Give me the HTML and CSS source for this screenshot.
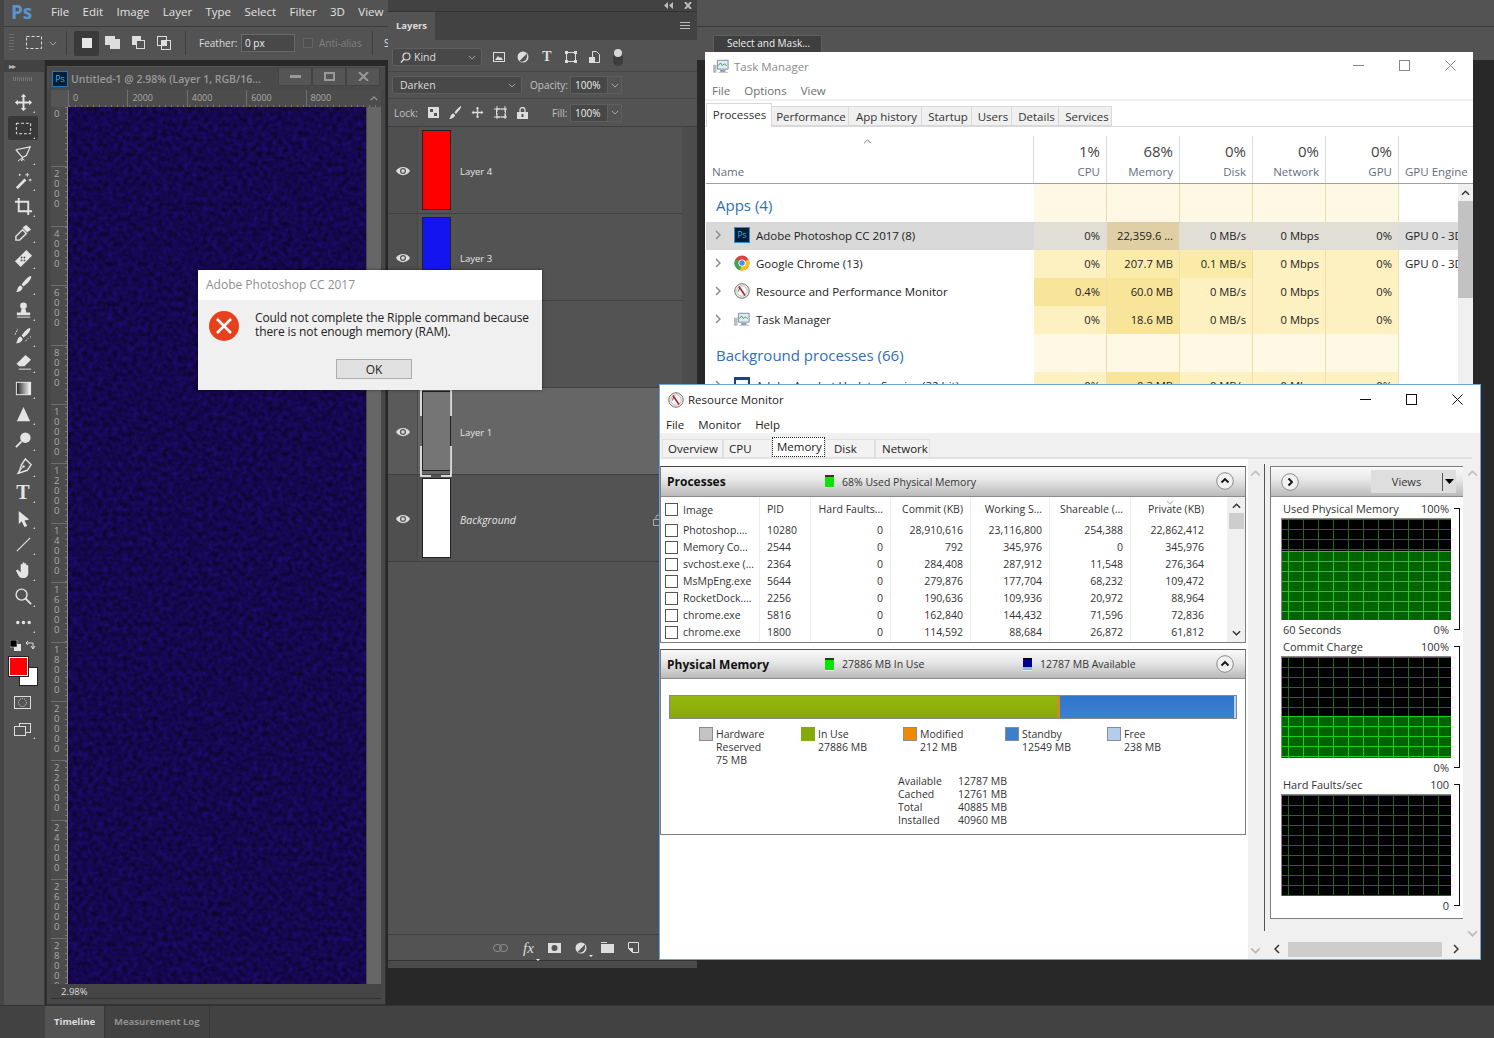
FILE: index.html
```html
<!DOCTYPE html>
<html lang="en">
<head>
<meta charset="utf-8">
<title>Photoshop, Task Manager and Resource Monitor</title>
<link rel="stylesheet" href="styles.css">
</head>
<body>
<svg class="defs" aria-hidden="true">
  <symbol id="chev-d" viewBox="0 0 10 6"><path d="M1 1l4 4 4-4" fill="none" stroke="currentColor"/></symbol>
  <symbol id="chev-r" viewBox="0 0 6 10"><path d="M1 1l4 4-4 4" fill="none" stroke="currentColor" stroke-width="1.5"/></symbol>
  <symbol id="up" viewBox="0 0 10 6"><path d="M1 5l4-4 4 4" fill="none" stroke="currentColor" stroke-width="1.6"/></symbol>
  <symbol id="down" viewBox="0 0 10 6"><path d="M1 1l4 4 4-4" fill="none" stroke="currentColor" stroke-width="1.6"/></symbol>
  <symbol id="eye" viewBox="0 0 14 10"><path d="M0 5c3-5.500 11-5.500 14 0-3 5.500-11 5.500-14 0z" fill="#ddd"/><circle cx="7" cy="5" r="3" fill="#555"/><circle cx="7" cy="5" r="1.700" fill="#ddd"/></symbol>
  <symbol id="tm" viewBox="0 0 18 16"><path d="M0 6h4v9H0z" fill="#b5bcc4"/><path d="M5 1h12v10H5z" fill="#dfeaf3" stroke="#74879a"/><path d="M6 7l2.500-3 2 3 2-2 3 2" fill="none" stroke="#3f9a4d"/><path d="M8 12h6v2H8z" fill="#8a949e"/><path d="M6 14h11v1H6z" fill="#aab2ba"/></symbol>
  <symbol id="rm" viewBox="0 0 16 16"><circle cx="8" cy="8" r="7.300" fill="#e8e4de" stroke="#7b7b7b"/><circle cx="8" cy="8" r="5" fill="#fff" stroke="#a9a9a9" stroke-width=".6"/><path d="M5 3.500l6 9" stroke="#b3202a" stroke-width="1.600"/><path d="M4.500 8.500l1-3.500" stroke="#333" stroke-width=".8"/></symbol>
  <symbol id="collapse" viewBox="0 0 18 18"><circle cx="9" cy="9" r="8.300" fill="#f1f1f1" stroke="#8c8c8c"/><path d="M5.500 10.500L9 7l3.500 3.500" fill="none" stroke="#111" stroke-width="1.800"/></symbol>
</svg>

<div class="app">
  <header class="menubar">
    <span class="ps-logo">Ps</span>
    <nav class="menu">
      <span>File</span><span>Edit</span><span>Image</span><span>Layer</span><span>Type</span><span>Select</span><span>Filter</span><span>3D</span><span>View</span>
    </nav>
  </header>

  <div class="options">
    <span class="grip-v"></span>
    <svg class="o-marq" width="16" height="14" viewBox="0 0 16 14"><rect x=".5" y=".5" width="15" height="12" fill="none" stroke="#ddd" stroke-dasharray="3 2"/></svg>
    <svg class="o-chev" width="8" height="5"><use href="#chev-d"/></svg>
    <span class="o-sep"></span>
    <span class="o-btn on"><svg width="12" height="12"><rect width="10" height="10" x="1" y="1" fill="#e6e6e6"/></svg></span>
    <span class="o-btn"><svg width="16" height="14" viewBox="0 0 16 14"><rect x="0" y="0" width="10" height="9" fill="#ddd"/><rect x="5" y="3" width="10" height="10" fill="#ddd"/></svg></span>
    <span class="o-btn"><svg width="14" height="14" viewBox="0 0 14 14"><rect x="0" y="0" width="9" height="9" fill="#ddd"/><rect x="4.500" y="4.500" width="8" height="8" fill="#535353" stroke="#ddd"/></svg></span>
    <span class="o-btn"><svg width="15" height="15" viewBox="0 0 15 15"><rect x=".5" y=".5" width="9" height="9" fill="none" stroke="#ddd"/><rect x="4.500" y="4.500" width="9" height="9" fill="none" stroke="#ddd"/><rect x="5" y="5" width="4" height="4" fill="#ddd"/></svg></span>
    <span class="o-sep second"></span>
    <span class="o-label feather">Feather:</span>
    <span class="o-input">0 px</span>
    <span class="o-check"></span>
    <span class="o-dim">Anti-alias</span>
    <span class="o-sep third"></span>
    <span class="o-label">S</span>
    <span class="o-push"></span>
    <span class="o-mask">Select and Mask...</span>
  </div>

  <div class="workspace">
    <aside class="tools">
      <div class="tools-head"><span>▸▸</span></div>
      <div class="tools-grip"></div>
      <span class="tool"><svg viewBox="0 0 20 20"><path d="M10 1l3 3h-2v5h5V7l3 3-3 3v-2h-5v5h2l-3 3-3-3h2v-5H4v2l-3-3 3-3v2h5V4H7z" fill="#e4e4e4"/></svg></span>
      <span class="tool active"><svg viewBox="0 0 20 20"><rect x="2.500" y="4.500" width="15" height="11" fill="none" stroke="#eee" stroke-dasharray="3 2"/></svg></span>
      <span class="tool"><svg viewBox="0 0 20 20"><path d="M2 5l15-3-4 9-4 2-1 4M2 5l5 6 2 2" fill="none" stroke="#e4e4e4" stroke-width="1.300"/><path d="M4 17l4-3 3 2" fill="none" stroke="#e4e4e4"/></svg></span>
      <span class="tool"><svg viewBox="0 0 20 20"><path d="M2 17l9-9 2 2-9 9z" fill="#e4e4e4"/><path d="M14 2v4M12 4h4M6 3v2M5 4h2M17 8v3M15.500 9.500h3" stroke="#e4e4e4"/></svg></span>
      <span class="tool"><svg viewBox="0 0 20 20"><path d="M5 1v14h14M1 5h14v14" fill="none" stroke="#e4e4e4" stroke-width="2"/></svg></span>
      <span class="tool"><svg viewBox="0 0 20 20"><path d="M13 2l5 5-3 2-1 1-5-5 1-1z" fill="#e4e4e4"/><path d="M9 7l4 4-7 7H2v-4z" fill="none" stroke="#e4e4e4" stroke-width="1.500"/></svg></span>
      <span class="tool"><svg viewBox="0 0 20 20"><path d="M1 13L13 1l6 6L7 19z" fill="#e4e4e4"/><g fill="#535353"><circle cx="8" cy="9" r="1"/><circle cx="11" cy="12" r="1"/><circle cx="8" cy="12" r="1"/><circle cx="11" cy="9" r="1"/></g></svg></span>
      <span class="tool"><svg viewBox="0 0 20 20"><path d="M18 1c1 3-4 8-8 11l-2-2c3-4 7-9 10-9z" fill="#e4e4e4"/><path d="M7 11l2 2c0 3-3 5-7 5 2-1 1-6 5-7z" fill="#e4e4e4"/></svg></span>
      <span class="tool"><svg viewBox="0 0 20 20"><circle cx="10" cy="5" r="3.500" fill="#e4e4e4"/><path d="M8 8h4l1 4H7zM3 12h14v3H3z" fill="#e4e4e4"/><path d="M3 17h14" stroke="#e4e4e4"/></svg></span>
      <span class="tool"><svg viewBox="0 0 20 20"><path d="M17 1c1 3-3 7-7 10L8 9c3-4 6-8 9-8z" fill="#e4e4e4"/><path d="M7 10l2 2c0 3-3 5-7 5 2-1 1-6 5-7z" fill="#e4e4e4"/><path d="M1 8l3-6M12 15l3-3M17 10l1 1" stroke="#e4e4e4" stroke-dasharray="2 1"/></svg></span>
      <span class="tool"><svg viewBox="0 0 20 20"><path d="M12 2l6 5-7 7H6l-3-3z" fill="#e4e4e4"/><path d="M5 17h13M6 14l-3-3" stroke="#e4e4e4" fill="none"/></svg></span>
      <span class="tool"><svg viewBox="0 0 20 20"><defs><linearGradient id="gr"><stop offset="0" stop-color="#222"/><stop offset="1" stop-color="#fff"/></linearGradient></defs><rect x="2.500" y="3.500" width="15" height="13" fill="url(#gr)" stroke="#eee"/></svg></span>
      <span class="tool"><svg viewBox="0 0 20 20"><path d="M10 2l7 15H3z" fill="#e4e4e4"/></svg></span>
      <span class="tool"><svg viewBox="0 0 20 20"><circle cx="12" cy="7" r="5.500" fill="#e4e4e4"/><path d="M8 11l-6 6" stroke="#e4e4e4" stroke-width="2"/></svg></span>
      <span class="tool"><svg viewBox="0 0 20 20"><path d="M12 2l6 6-4 6-9 3 3-9z" fill="none" stroke="#e4e4e4" stroke-width="1.500"/><path d="M3 18l6-7" stroke="#e4e4e4"/><circle cx="10" cy="10" r="1.300" fill="#e4e4e4"/></svg></span>
      <span class="tool tool-t">T</span>
      <span class="tool"><svg viewBox="0 0 20 20"><path d="M5 2l11 9-5 1 3 6-3 1-3-6-3 3z" fill="#e4e4e4"/></svg></span>
      <span class="tool"><svg viewBox="0 0 20 20"><path d="M3 17L17 3" stroke="#e4e4e4" stroke-width="1.200"/></svg></span>
      <span class="tool"><svg viewBox="0 0 20 20"><path d="M2 10l2-1 3 3V4c0-1 2-1 2 0V2c0-1 2-1 2 0v1c0-1 2-1 2 0v2c0-1 2-1 2 0v8c0 3-2 5-5 5H9c-3 0-4-2-5-4z" fill="#e4e4e4"/></svg></span>
      <span class="tool"><svg viewBox="0 0 20 20"><circle cx="8" cy="8" r="5.800" fill="none" stroke="#e4e4e4" stroke-width="1.500"/><path d="M12 12l6 6" stroke="#e4e4e4" stroke-width="2"/></svg></span>
      <span class="tool dots"><svg viewBox="0 0 20 20"><g fill="#e4e4e4"><circle cx="4" cy="10" r="1.800"/><circle cx="10" cy="10" r="1.800"/><circle cx="16" cy="10" r="1.800"/></g></svg></span>
      <div class="mini-swatch">
        <svg width="11" height="11" viewBox="0 0 11 11"><rect x="4" y="4" width="7" height="7" fill="#e4e4e4"/><rect width="7" height="7" fill="#000" stroke="#ddd" stroke-width=".6"/></svg>
        <svg width="11" height="11" viewBox="0 0 11 11"><path d="M1 3h7v5M6 6l2 3 2-3M3 1L1 3l2 2" fill="none" stroke="#ddd"/></svg>
      </div>
      <div class="swatches"><span class="bg"></span><span class="fg"></span></div>
      <span class="tool2"><svg viewBox="0 0 18 14"><rect x=".5" y=".5" width="16" height="12" fill="none" stroke="#ddd"/><circle cx="8.500" cy="6.500" r="4" fill="none" stroke="#ddd" stroke-dasharray="1 1"/></svg></span>
      <span class="tool2 arrowed"><svg viewBox="0 0 18 14"><rect x="5.500" y=".5" width="11" height="9" fill="none" stroke="#ddd"/><rect x=".5" y="3.500" width="11" height="9" fill="#535353" stroke="#ddd"/></svg></span>
    </aside>

    <section class="docarea">
      <div class="docwin">
        <div class="doc-title">
          <span class="ps-chip">Ps</span>
          <span class="doc-name">Untitled-1 @ 2.98% (Layer 1, RGB/16...</span>
          <span class="doc-btns">
            <span><svg width="11" height="3"><rect width="11" height="3" fill="#999"/></svg></span>
            <span><svg width="11" height="9"><rect x="1" y="1" width="9" height="7" fill="none" stroke="#999" stroke-width="2"/></svg></span>
            <span><svg width="11" height="9"><path d="M1 0l9 9M10 0L1 9" stroke="#999" stroke-width="2"/></svg></span>
          </span>
        </div>
        <div class="hruler">
          <span class="corner"></span>
          <span class="rk">0</span><span class="rk">2000</span><span class="rk">4000</span><span class="rk">6000</span><span class="rk">8000</span>
          <svg class="ruler-up" width="8" height="5"><use href="#up"/></svg>
        </div>
        <div class="docmain">
          <div class="vruler">
            <span>0</span><span>2000</span><span>4000</span><span>6000</span><span>8000</span><span>10000</span><span>12000</span><span>14000</span><span>16000</span><span>18000</span><span>20000</span><span>22000</span><span>24000</span><span>26000</span><span>28000</span>
          </div>
          <svg class="noise" width="298" height="878">
            <filter id="n" x="0" y="0" width="100%" height="100%" color-interpolation-filters="sRGB">
              <feTurbulence type="fractalNoise" baseFrequency=".2" numOctaves="2" seed="7"/>
              <feColorMatrix values=".1 0 0 0 .035  .03 0 0 0 .015  .42 0 0 0 .1  0 0 0 0 1"/>
            </filter>
            <rect width="298" height="878" filter="url(#n)"/>
          </svg>
          <div class="doc-scroll"></div>
        </div>
        <div class="doc-status"><span>2.98%</span></div>
      </div>
    </section>
  </div>

  <footer class="timeline">
    <span class="tl-tab on">Timeline</span>
    <span class="tl-tab">Measurement Log</span>
  </footer>
</div>

<section class="layers-win">
  <div class="lp-top">
    <svg width="9" height="7" viewBox="0 0 9 7"><path d="M4 0v7L0 3.500zM9 0v7L5 3.500z" fill="#bbb"/></svg>
    <svg width="8" height="7" viewBox="0 0 8 7"><path d="M1 0l6 7M7 0L1 7" stroke="#bbb" stroke-width="2"/></svg>
  </div>
  <div class="lp-tabs">
    <span class="lp-tab">Layers</span>
    <svg class="lp-menu" width="10" height="7"><path d="M0 .5h10M0 3.500h10M0 6.500h10" stroke="#bbb"/></svg>
  </div>
  <div class="lp-row kind">
    <span class="sel w90"><svg width="11" height="11" viewBox="0 0 11 11"><circle cx="6.500" cy="4.500" r="3.500" fill="none" stroke="#ddd" stroke-width="1.200"/><path d="M4 7l-3 3.500" stroke="#ddd" stroke-width="1.400"/></svg><b>Kind</b><svg class="cv" width="8" height="5"><use href="#chev-d"/></svg></span>
    <span class="kicons">
      <svg width="12" height="10" viewBox="0 0 12 10"><rect x=".5" y=".5" width="11" height="9" fill="none" stroke="#ddd"/><path d="M2 8l3-4 2 2 1-1 2 3z" fill="#ddd"/></svg>
      <svg width="12" height="12" viewBox="0 0 12 12"><circle cx="6" cy="6" r="5.500" fill="#ddd"/><path d="M10 2.500L2.500 10c2 1.500 8.500 1 7.500-7.500z" fill="#535353"/></svg>
      <span class="kt">T</span>
      <svg width="12" height="12" viewBox="0 0 12 12"><rect x="1.500" y="1.500" width="9" height="9" fill="none" stroke="#ddd"/><g fill="#ddd"><rect width="3" height="3"/><rect x="9" width="3" height="3"/><rect y="9" width="3" height="3"/><rect x="9" y="9" width="3" height="3"/></g></svg>
      <svg width="11" height="12" viewBox="0 0 11 12"><path d="M3.500.5h4l3 3v8h-10v-5h3z" fill="none" stroke="#ddd"/><rect x="0" y="6" width="6" height="6" fill="#ddd"/></svg>
    </span>
    <span class="toggle"><i></i></span>
  </div>
  <div class="lp-row blend">
    <span class="sel w130"><b>Darken</b><svg class="cv" width="8" height="5"><use href="#chev-d"/></svg></span>
    <span class="lbl">Opacity:</span>
    <span class="num">100%<em><svg width="8" height="5"><use href="#chev-d"/></svg></em></span>
  </div>
  <div class="lp-row lock">
    <span class="lbl lock-l">Lock:</span>
    <span class="licons">
      <svg width="11" height="11" viewBox="0 0 11 11"><rect width="11" height="11" fill="#ddd"/><g fill="#535353"><rect x="2" y="2" width="3" height="3"/><rect x="6" y="6" width="3" height="3"/></g></svg>
      <svg width="13" height="13" viewBox="0 0 13 13"><path d="M12 0c1 2-3 5-5 8L5.500 6.500C7 4 10 1 12 0zM4.500 7.500L6 9c0 2-3 4-6 4 2-1 1-5 4.500-5.500z" fill="#ddd"/></svg>
      <svg width="13" height="13" viewBox="0 0 20 20"><path d="M10 1l3 3h-2v5h5V7l3 3-3 3v-2h-5v5h2l-3 3-3-3h2v-5H4v2l-3-3 3-3v2h5V4H7z" fill="#ddd"/></svg>
      <svg width="14" height="13" viewBox="0 0 14 13"><path d="M2.500 3h9v8h-9zM0 3h14M3 0v13M11 0v13M0 11h14" fill="none" stroke="#ddd" stroke-dasharray="6 1"/></svg>
      <svg width="11" height="12" viewBox="0 0 11 12"><path d="M3 5V3a2.500 2.500 0 015 0v2" fill="none" stroke="#ddd" stroke-width="1.300"/><rect y="5" width="11" height="7" fill="#ddd"/><rect x="4.500" y="7" width="2" height="3" fill="#535353"/></svg>
    </span>
    <span class="lbl fill-l">Fill:</span>
    <span class="num">100%<em><svg width="8" height="5"><use href="#chev-d"/></svg></em></span>
  </div>
  <div class="lp-list">
    <div class="layer"><span class="eyecol"><svg width="14" height="10"><use href="#eye"/></svg></span><span class="thumb red"></span><span class="lname">Layer 4</span></div>
    <div class="layer"><span class="eyecol"><svg width="14" height="10"><use href="#eye"/></svg></span><span class="thumb blue"></span><span class="lname">Layer 3</span></div>
    <div class="layer"><span class="eyecol"><svg width="14" height="10"><use href="#eye"/></svg></span><span class="thumb white"></span><span class="lname">Layer 2</span></div>
    <div class="layer current"><span class="eyecol"><svg width="14" height="10"><use href="#eye"/></svg></span><span class="thumb grey"><svg class="brackets" width="32" height="90" viewBox="0 0 32 90"><path d="M1 28V1M31 28V1M1 58v30h10M31 58v30H21" fill="none" stroke="#fff" stroke-width="1.500"/></svg></span><span class="lname">Layer 1</span></div>
    <div class="layer"><span class="eyecol"><svg width="14" height="10"><use href="#eye"/></svg></span><span class="thumb white"></span><span class="lname ital">Background</span><svg class="bg-lock" width="10" height="12" viewBox="0 0 10 12"><path d="M3 5V3a2 2 0 014 0v2M.5 5.500h9v6h-9z" fill="none" stroke="#aaa"/></svg></div>
    <div class="lp-empty"></div>
  </div>
  <div class="lp-foot">
    <svg width="15" height="8" viewBox="0 0 15 8"><rect x=".5" y=".5" width="8" height="7" rx="3.500" fill="none" stroke="#8e8e8e"/><rect x="6.500" y=".5" width="8" height="7" rx="3.500" fill="none" stroke="#8e8e8e"/></svg>
    <span class="fx tri">fx</span>
    <svg width="13" height="10" viewBox="0 0 13 10"><rect width="13" height="10" fill="#ddd"/><circle cx="6.500" cy="5" r="3" fill="#535353"/></svg>
    <span class="tri"><svg width="12" height="12" viewBox="0 0 12 12"><circle cx="6" cy="6" r="5.500" fill="#ddd"/><path d="M10 2.500L2.500 10c2 1.500 8.500 1 7.500-7.500z" fill="#535353"/></svg></span>
    <svg width="13" height="11" viewBox="0 0 13 11"><path d="M0 0h6v1H0zM0 2h13v9H0z" fill="#ddd"/></svg>
    <svg width="11" height="11" viewBox="0 0 11 11"><path d="M.5.500h10v10h-6l-4-4z" fill="none" stroke="#ddd"/><path d="M0 6h5v5z" fill="#ddd"/></svg>
  </div>
  <div class="lp-grip"></div>
</section>

<section class="taskman">
  <div class="win-title tm-title">
    <svg width="16" height="15"><use href="#tm"/></svg>
    <span>Task Manager</span>
    <span class="win-btns light">
      <svg width="11" height="11"><path d="M0 5.500h11" stroke="#888"/></svg>
      <svg width="11" height="11"><rect x=".5" y=".5" width="10" height="10" fill="none" stroke="#888"/></svg>
      <svg width="11" height="11"><path d="M.5.500l10 10M10.500.500l-10 10" stroke="#888"/></svg>
    </span>
  </div>
  <div class="tm-menu"><span>File</span><span>Options</span><span>View</span></div>
  <div class="tm-tabs">
    <span class="tm-tab on">Processes</span><span class="tm-tab">Performance</span><span class="tm-tab">App history</span><span class="tm-tab">Startup</span><span class="tm-tab">Users</span><span class="tm-tab">Details</span><span class="tm-tab">Services</span>
  </div>
  <div class="tm-grid tm-head">
    <div class="h-name"><svg class="sort" width="9" height="5"><use href="#chev-d" transform="matrix(1 0 0 -1 0 5)"/></svg><span>Name</span></div>
    <div class="h"><b>1%</b><span>CPU</span></div>
    <div class="h"><b>68%</b><span>Memory</span></div>
    <div class="h"><b>0%</b><span>Disk</span></div>
    <div class="h"><b>0%</b><span>Network</span></div>
    <div class="h"><b>0%</b><span>GPU</span></div>
    <div class="h eng"><span>GPU Engine</span></div>
  </div>
  <div class="tm-body">
    <div class="tm-rows">
      <div class="tm-grid sec"><div class="sn">Apps (4)</div><i></i><i></i><i></i><i></i><i></i><u></u></div>
      <div class="tm-grid row selrow">
        <div class="n"><svg class="exp" width="6" height="10"><use href="#chev-r"/></svg><span class="ps-app">Ps</span>Adobe Photoshop CC 2017 (8)</div>
        <i>0%</i><i class="m1">22,359.6 ...</i><i>0 MB/s</i><i>0 Mbps</i><i>0%</i><u>GPU 0 - 3D</u>
      </div>
      <div class="tm-grid row">
        <div class="n"><svg class="exp" width="6" height="10"><use href="#chev-r"/></svg><svg class="ap" width="16" height="16" viewBox="0 0 16 16"><circle cx="8" cy="8" r="7.500" fill="#d9433b"/><path d="M8 8L1.500 4.200A7.500 7.500 0 0 0 6 15.200z" fill="#3aa655"/><path d="M8 8l-2 7.200A7.500 7.500 0 0 0 15.500 8c0-1.200-.3-2.600-1-3.700z" fill="#f5c41b"/><circle cx="8" cy="8" r="3.600" fill="#fff"/><circle cx="8" cy="8" r="2.700" fill="#4a8be8"/></svg>Google Chrome (13)</div>
        <i>0%</i><i class="m2">207.7 MB</i><i class="m2">0.1 MB/s</i><i>0 Mbps</i><i>0%</i><u>GPU 0 - 3D</u>
      </div>
      <div class="tm-grid row">
        <div class="n"><svg class="exp" width="6" height="10"><use href="#chev-r"/></svg><svg class="ap" width="16" height="16"><use href="#rm"/></svg>Resource and Performance Monitor</div>
        <i class="m3">0.4%</i><i class="m3">60.0 MB</i><i>0 MB/s</i><i>0 Mbps</i><i>0%</i><u></u>
      </div>
      <div class="tm-grid row">
        <div class="n"><svg class="exp" width="6" height="10"><use href="#chev-r"/></svg><svg class="ap" width="16" height="15"><use href="#tm"/></svg>Task Manager</div>
        <i>0%</i><i class="m3">18.6 MB</i><i>0 MB/s</i><i>0 Mbps</i><i>0%</i><u></u>
      </div>
      <div class="tm-grid sec"><div class="sn">Background processes (66)</div><i></i><i></i><i></i><i></i><i></i><u></u></div>
      <div class="tm-grid row">
        <div class="n"><svg class="exp" width="6" height="10"><use href="#chev-r"/></svg><svg class="ap" width="16" height="16"><rect width="16" height="16" fill="#1c3f94"/><rect x="2" y="3" width="12" height="11" fill="#fff"/></svg>Adobe Acrobat Update Service (32 bit)</div>
        <i>0%</i><i class="m3">0.3 MB</i><i>0 MB/s</i><i>0 Mbps</i><i>0%</i><u></u>
      </div>
    </div>
    <div class="tm-scroll"><svg width="9" height="6"><use href="#up"/></svg><span></span></div>
  </div>
</section>

<section class="resmon">
  <div class="win-title rm-title">
    <svg width="16" height="16"><use href="#rm"/></svg>
    <span>Resource Monitor</span>
    <span class="win-btns dark">
      <svg width="11" height="11"><path d="M0 5.500h11" stroke="#111"/></svg>
      <svg width="11" height="11"><rect x=".5" y=".5" width="10" height="10" fill="none" stroke="#111"/></svg>
      <svg width="11" height="11"><path d="M.5.500l10 10M10.500.500l-10 10" stroke="#111"/></svg>
    </span>
  </div>
  <div class="rm-menu"><span>File</span><span>Monitor</span><span>Help</span></div>
  <div class="rm-tabs">
    <span class="rt t1">Overview</span><span class="rt t2">CPU</span><span class="rt t3 on">Memory</span><span class="rt t4">Disk</span><span class="rt t5">Network</span>
  </div>
  <div class="rm-main">
    <div class="rm-left">
      <div class="pane">
        <div class="pane-head"><strong>Processes</strong><span class="chip g"></span><span class="ph-t">68% Used Physical Memory</span><svg class="col" width="18" height="18"><use href="#collapse"/></svg></div>
        <div class="ptable">
          <div class="pcols">
            <div class="pr phead"><span class="ck-c"><i class="ck"></i>Image</span><span>PID</span><span class="r">Hard Faults...</span><span class="r">Commit (KB)</span><span class="r">Working S...</span><span class="r">Shareable (...</span><span class="r sorted">Private (KB)</span></div>
            <div class="pr"><span class="ck-c"><i class="ck"></i>Photoshop....</span><span>10280</span><span class="r">0</span><span class="r">28,910,616</span><span class="r">23,116,800</span><span class="r">254,388</span><span class="r">22,862,412</span></div>
            <div class="pr"><span class="ck-c"><i class="ck"></i>Memory Co...</span><span>2544</span><span class="r">0</span><span class="r">792</span><span class="r">345,976</span><span class="r">0</span><span class="r">345,976</span></div>
            <div class="pr"><span class="ck-c"><i class="ck"></i>svchost.exe (...</span><span>2364</span><span class="r">0</span><span class="r">284,408</span><span class="r">287,912</span><span class="r">11,548</span><span class="r">276,364</span></div>
            <div class="pr"><span class="ck-c"><i class="ck"></i>MsMpEng.exe</span><span>5644</span><span class="r">0</span><span class="r">279,876</span><span class="r">177,704</span><span class="r">68,232</span><span class="r">109,472</span></div>
            <div class="pr"><span class="ck-c"><i class="ck"></i>RocketDock....</span><span>2256</span><span class="r">0</span><span class="r">190,636</span><span class="r">109,936</span><span class="r">20,972</span><span class="r">88,964</span></div>
            <div class="pr"><span class="ck-c"><i class="ck"></i>chrome.exe</span><span>5816</span><span class="r">0</span><span class="r">162,840</span><span class="r">144,432</span><span class="r">71,596</span><span class="r">72,836</span></div>
            <div class="pr"><span class="ck-c"><i class="ck"></i>chrome.exe</span><span>1800</span><span class="r">0</span><span class="r">114,592</span><span class="r">88,684</span><span class="r">26,872</span><span class="r">61,812</span></div>
          </div>
          <div class="pscroll"><svg width="9" height="6"><use href="#up"/></svg><span></span><svg class="pdown" width="9" height="6"><use href="#down"/></svg></div>
        </div>
      </div>
      <div class="pane phys">
        <div class="pane-head"><strong>Physical Memory</strong><span class="chip g"></span><span class="ph-t inuse">27886 MB In Use</span><span class="chip b"></span><span class="ph-t">12787 MB Available</span><svg class="col" width="18" height="18"><use href="#collapse"/></svg></div>
        <div class="phys-body">
          <div class="membar"><span class="mb-use"></span><span class="mb-mod"></span><span class="mb-sb"></span><span class="mb-free"></span></div>
          <div class="legend">
            <div class="lg"><i class="hw"></i><p>Hardware<br>Reserved<br>75 MB</p></div>
            <div class="lg"><i class="use"></i><p>In Use<br>27886 MB</p></div>
            <div class="lg"><i class="mod"></i><p>Modified<br>212 MB</p></div>
            <div class="lg"><i class="sb"></i><p>Standby<br>12549 MB</p></div>
            <div class="lg"><i class="free"></i><p>Free<br>238 MB</p></div>
          </div>
          <div class="stats"><span>Available</span><span>12787 MB</span><span>Cached</span><span>12761 MB</span><span>Total</span><span>40885 MB</span><span>Installed</span><span>40960 MB</span></div>
        </div>
      </div>
    </div>
    <div class="vscroll left-s"><svg width="11" height="7"><use href="#up"/></svg><svg class="sd" width="11" height="7"><use href="#down"/></svg></div>
    <div class="rm-split"></div>
    <div class="rm-right">
      <div class="graphs">
        <div class="pane-head gh">
          <svg width="18" height="18" viewBox="0 0 18 18"><circle cx="9" cy="9" r="8.300" fill="#f1f1f1" stroke="#8c8c8c"/><path d="M7.500 5.500L11 9l-3.500 3.500" fill="none" stroke="#111" stroke-width="1.800"/></svg>
          <span class="views"><span>Views</span><i></i><svg width="9" height="5"><path d="M0 0h9L4.500 5z" fill="#000"/></svg></span>
        </div>
        <div class="gbody">
          <div class="gr-line"><span>Used Physical Memory</span><span>100%</span></div>
          <div class="chart"><div class="fill f68"></div></div>
          <div class="gr-line"><span>60 Seconds</span><span>0%</span></div>
          <div class="gr-line"><span>Commit Charge</span><span>100%</span></div>
          <div class="chart"><div class="fill f42"></div></div>
          <div class="gr-line"><span></span><span>0%</span></div>
          <div class="gr-line"><span>Hard Faults/sec</span><span>100</span></div>
          <div class="chart"></div>
          <div class="gr-line"><span></span><span>0</span></div>
          <span class="brk b1"></span><span class="brk b2"></span><span class="brk b3"></span>
        </div>
      </div>
      <div class="hscroll"><svg width="6" height="10" viewBox="0 0 6 10"><path d="M5 1L1 5l4 4" fill="none" stroke="#333" stroke-width="1.500"/></svg><span></span><svg width="6" height="10"><use href="#chev-r"/></svg></div>
    </div>
    <div class="vscroll right-s"><svg width="11" height="7"><use href="#up"/></svg><svg class="sd short" width="11" height="7"><use href="#down"/></svg></div>
  </div>
</section>

<section class="dialog">
  <div class="dlg-title">Adobe Photoshop CC 2017</div>
  <div class="dlg-body">
    <div class="dlg-msg">
      <svg width="30" height="30" viewBox="0 0 30 30"><circle cx="15" cy="15" r="15" fill="#e8401c"/><path d="M8 8l14 14M22 8L8 22" stroke="#fff" stroke-width="2.600"/></svg>
      <p>Could not complete the Ripple command because<br>there is not enough memory (RAM).</p>
    </div>
    <div class="dlg-btn"><span>OK</span></div>
  </div>
</section>
</body>
</html>
```
FILE: styles.css
```css
* { box-sizing: border-box; }
html, body { margin: 0; padding: 0; }
body {
  position: relative;
  width: 1494px;
  height: 1038px;
  overflow: hidden;
  background: #282828;
  font: 12px "Open Sans", "Noto Sans", sans-serif;
  color: #222;
}
i, em { font-style: normal; }
p { margin: 0; }
.defs { position: absolute; width: 0; height: 0; }
svg { display: block; flex: none; }

.app { display: flex; flex-direction: column; height: 1038px; }

/* Photoshop chrome */
.menubar {
  height: 27px; flex: none;
  display: flex; align-items: center;
  background: #535353;
  border-bottom: 1px solid #3c3c3c;
  padding: 0 0 3px 4px;
  border-left: 4px solid #454545;
}
.ps-logo { width: 43px; padding-left: 3px; font: bold 19px/22px "Open Sans", sans-serif; color: #5b95cc; letter-spacing: -.3px; }
.menu { display: flex; gap: 13.400px; color: #e2e2e2; font-size: 11.5px; }
.options {
  height: 33px; flex: none;
  display: flex; align-items: center;
  background: #535353;
  color: #ddd; font-size: 10px;
  padding-left: 8px;
  padding-bottom: 1px;
  border-left: 4px solid #454545;
}
.grip-v { width: 5px; height: 18px; margin-left: -3px; background: repeating-linear-gradient(#6c6c6c 0 1px, transparent 1px 3px); }
.o-marq { margin-left: 12px; }
.o-chev { margin-left: 7px; color: #bbb; }
.o-sep { width: 1px; height: 24px; background: #3e3e3e; margin: 0 7px 0 9px; }
.o-sep.second { margin: 0 13px 0 7px; }
.o-sep.third { margin: 0 11px 0 13px; }
.o-btn { width: 25px; height: 25px; display: flex; align-items: center; justify-content: center; margin-right: 1px; }
.o-btn.on { background: #3a3a3a; border-radius: 2px; }
.o-label { white-space: nowrap; }
.o-label.feather { width: 36px; }
.o-input { width: 54px; height: 18px; margin-left: 6px; padding-left: 3px; line-height: 16px; background: #484848; border: 1px solid #6a6a6a; color: #eee; }
.o-check { width: 10px; height: 10px; margin: 0 6px 0 8px; border: 1px solid #636363; background: #4f4f4f; }
.o-dim { color: #7f7f7f; white-space: nowrap; width: 40px; }
.o-push { flex: 1; }
.o-mask {
  align-self: flex-start;
  width: 109px; height: 17px; margin: 8px 672px 0 0;
  padding-left: 13px; color: #eee; font-size: 10px; line-height: 15px;
  background: #3f3f3f; border: 1px solid #5e5e5e; border-bottom: 0;
  border-radius: 2px 2px 0 0; white-space: nowrap;
}
.workspace { flex: 1; min-height: 0; display: flex; }
.tools {
  width: 45px; flex: none;
  display: flex; flex-direction: column; align-items: center;
  background: #535353;
  border-left: 4px solid #454545;
  border-right: 1px solid #3c3c3c;
  padding-right: 2px;
}
.tools-head { align-self: stretch; height: 12px; margin-right: -2px; background: #424242; color: #bbb; font-size: 8px; line-height: 12px; padding-left: 5px; letter-spacing: -1px; }
.tools-grip { width: 20px; height: 4px; margin: 5px 0 9px; background: repeating-linear-gradient(90deg, #777 0 1px, transparent 1px 2px); }
.tool {
  position: relative;
  width: 30px; height: 24px; margin-bottom: 2px;
  display: flex; align-items: center; justify-content: center;
  flex: none;
}
.tool svg { width: 19px; height: 19px; }
.tool::after { content: ""; position: absolute; right: 3px; bottom: 1px; border: 1.500px solid transparent; border-right-color: #ccc; border-bottom-color: #ccc; }
.tool.active { background: #383838; border-radius: 2px; }
.tool-t { font: bold 20px/24px "Liberation Serif", serif; color: #e4e4e4; }
.mini-swatch { width: 26px; display: flex; justify-content: space-between; margin: 4px 0 6px; }
.swatches { position: relative; width: 29px; height: 29px; margin: 0 0 4px; flex: none; }
.swatches .fg { position: absolute; left: 0; top: 0; width: 19px; height: 19px; background: #f00; border: 1px solid #fff; outline: 1px solid #222; }
.swatches .bg { position: absolute; right: 0; bottom: 0; width: 19px; height: 19px; background: #fff; border: 1px solid #222; }
.tool2 { position: relative; width: 18px; height: 14px; margin-top: 6px; margin-bottom: 7px; }
.tool2 svg { width: 18px; height: 14px; }
.tool2.arrowed::after { content: ""; position: absolute; right: -3px; bottom: -2px; border: 1.500px solid transparent; border-right-color: #ccc; border-bottom-color: #ccc; }
.docarea { flex: 1; background: #282828; padding: 6px 0 0 1px; }
.docwin { width: 340px; height: 939px; background: #474747; border: 1px solid #333; border-top: 0; display: flex; flex-direction: column; padding: 0 4px; }
.doc-title { height: 24px; margin: 0 -4px; padding-left: 5px; flex: none; display: flex; align-items: center; background: #4a4a4a; border-top: 1px solid #555; }
.ps-chip { width: 16px; height: 16px; background: #001e36; border: 1px solid #1c7bbd; color: #46aeea; font: 9px/14px "Open Sans", sans-serif; text-align: center; }
.doc-name { margin-left: 3px; width: 205px; white-space: nowrap; color: #9a9a9a; font-weight: 600; font-size: 10.5px; }
.doc-btns { display: flex; margin: -5px 0 0 2px; height: 19px; }
.doc-btns span { width: 34px; height: 19px; background: #555; border: 1px solid #444; display: flex; align-items: center; justify-content: center; }
.hruler { height: 17px; flex: none; display: flex; background: #4c4c4c repeating-linear-gradient(90deg, #777 0 1px, transparent 1px 6px) 0 100% / 100% 2px no-repeat; position: relative; color: #aaa; font-size: 9px; line-height: 15px; }
.corner { width: 17px; flex: none; background: #555; }
.rk { width: 59.400px; padding-left: 4px; border-left: 1px solid #707070; flex: none; }
.ruler-up { position: absolute; right: 3px; top: 6px; color: #999; }
.docmain { flex: 1; min-height: 0; display: flex; }
.vruler { width: 17px; flex: none; overflow: hidden; background: #4c4c4c repeating-linear-gradient(#777 0 1px, transparent 1px 6px) 100% 0 / 2px 100% no-repeat; border-right: 1px solid #8a8a8a; }
.vruler span { display: block; height: 59.400px; padding: 2px 8px 0 3px; width: 16px; border-top: 1px solid #6e6e6e; color: #aaa; font: 9.500px/10px "Open Sans", sans-serif; word-break: break-all; }
.vruler span:first-child { border-top: 0; }
.noise { width: 298px; height: 878px; }
.doc-scroll { width: 14px; flex: none; background: #666; margin-left: 1px; }
.doc-status { height: 15px; flex: none; margin-bottom: 5px; color: #ddd; font-size: 9.500px; line-height: 15px; padding-left: 10px; border-bottom: 1px solid #333; background: #454545; }
.timeline { height: 33px; flex: none; display: flex; background: #424242; border-top: 1px solid #333; padding-left: 45px; }
.tl-tab { padding: 0 9px; line-height: 31px; font-size: 9.500px; font-weight: 700; color: #8f8f8f; border-right: 1px solid #383838; white-space: nowrap; }
.tl-tab.on { background: #535353; color: #ddd; }

/* Layers panel */
.layers-win { position: absolute; left: 388px; top: 0; width: 309px; height: 968px; background: #535353; display: flex; flex-direction: column; color: #ddd; font-size: 10.500px; }
.lp-top { height: 12px; flex: none; background: #424242; display: flex; align-items: center; justify-content: flex-end; gap: 11px; padding-right: 5px; border-bottom: 1px solid #333; }
.lp-tabs { height: 28px; flex: none; display: flex; align-items: flex-start; justify-content: space-between; background: #424242; padding-right: 7px; }
.lp-tab { width: 47px; height: 28px; background: #535353; text-align: center; font-weight: 700; font-size: 9.500px; line-height: 27px; }
.lp-menu { margin-top: 10px; }
.lp-row { display: flex; align-items: center; border-bottom: 1px solid #464646; padding-left: 4px; flex: none; }
.lp-row.kind { height: 32px; padding-top: 3px; }
.lp-row.blend { height: 27px; }
.lp-row.lock { height: 28px; border-bottom: 1px solid #3f3f3f; }
.sel { height: 18px; display: flex; align-items: center; background: #484848; border: 1px solid #5e5e5e; border-radius: 2px; padding-left: 7px; position: relative; }
.sel b { font-weight: 400; margin-left: 3px; }
.sel.w90 { width: 90px; }
.sel.w130 { width: 130px; padding-left: 4px; }
.cv { position: absolute; right: 5px; top: 6px; color: #bbb; }
.kicons { display: flex; align-items: center; gap: 12px; margin-left: 11px; }
.kt { font: bold 14px/14px "Liberation Serif", serif; width: 12px; text-align: center; }
.toggle { position: relative; width: 10px; height: 13px; margin: 4px 0 0 13px; background: #3d3d3d; border-radius: 5px; }
.toggle i { position: absolute; top: -4px; left: 1px; width: 8px; height: 8px; border-radius: 50%; background: #d6d6d6; }
.lbl { color: #c2c2c2; font-size: 10px; }
.blend .lbl { margin-left: 8px; width: 40px; white-space: nowrap; }
.num { width: 52px; height: 18px; display: flex; justify-content: space-between; line-height: 16px; background: #474747; border: 1px solid #5e5e5e; padding-left: 4px; color: #eee; font-size: 10px; }
.num em { width: 14px; display: flex; align-items: center; justify-content: center; border-left: 1px solid #5e5e5e; background: #535353; color: #bbb; }
.lock-l { margin-left: 2px; width: 34px; }
.licons { display: flex; align-items: center; gap: 9.500px; width: 122px; }
.fill-l { width: 18px; margin-left: 2px; }
.lp-list { flex: 1; min-height: 0; display: flex; flex-direction: column; background: linear-gradient(90deg, #535353 294px, #4c4c4c 294px); }
.layer { height: 87px; flex: none; display: flex; align-items: flex-start; border-bottom: 1px solid #404040; width: 294px; }
.eyecol { width: 30px; height: 86px; display: flex; align-items: center; justify-content: center; border-right: 1px solid #484848; padding-top: 1px; background: #4f4f4f; }
.thumb { position: relative; width: 29px; height: 80px; margin: 3px 0 0 4px; border: 1px solid #222; flex: none; }
.thumb.red { background: #f00; }
.thumb.blue { background: #1414f0; }
.thumb.white { background: #fff; }
.thumb.grey { background: #757575; }
.brackets { position: absolute; left: -3px; top: -4px; }
.lname { margin: 38px 0 0 9px; font-size: 9.500px; line-height: 14px; color: #e4e4e4; }
.lname.ital { font-style: italic; font-size: 10.500px; }
.bg-lock { margin: 39px 19px 0 auto; }
.layer.current { background: #666; width: 294px; }
.layer.current .eyecol { background: #5a5a5a; }
.lp-empty { flex: 1; width: 294px; }
.lp-foot { height: 27px; flex: none; display: flex; align-items: center; background: #535353; border-top: 1px solid #414141; border-bottom: 1px solid #333; padding-left: 105px; gap: 14px; }
.tri { position: relative; }
.tri::after { content: ""; position: absolute; right: -6px; bottom: -3px; border: 2px solid transparent; border-top-color: #eee; border-bottom: 0; }
.fx { font: italic 15px/20px "Liberation Serif", serif; color: #ddd; margin-left: 1px; }
.lp-grip { height: 7px; flex: none; background: #4a4a4a; }

/* Windows chrome shared */
.win-title { display: flex; align-items: center; background: #fff; position: relative; flex: none; }
.win-btns { position: absolute; top: 0; bottom: 0; display: flex; align-items: center; }

/* Task Manager */
.taskman { position: absolute; left: 705px; top: 52px; width: 768px; height: 333px; overflow: hidden; background: #fff; display: flex; flex-direction: column; }
.tm-title { height: 28px; padding-left: 8px; color: #8c8c8c; font-size: 11.500px; gap: 5px; }
.win-btns.light { right: 17px; gap: 35px; top: -1px; }
.tm-menu { height: 21px; flex: none; display: flex; gap: 14px; padding-left: 7px; font-size: 11.500px; color: #6d6d6d; line-height: 22px; border-bottom: 2px solid #f1f1f1; }
.tm-tabs { height: 26px; flex: none; display: flex; align-items: flex-end; padding-left: 1px; border-bottom: 1px solid #d9d9d9; font-size: 11.500px; }
.tm-tab { height: 20px; line-height: 20px; padding-left: 3px; background: #f0f0f0; border: 1px solid #d9d9d9; border-left: 0; color: #333; white-space: nowrap; text-align: center; }
.tm-tab:nth-child(2) { width: 77px; padding-left: 2px; }
.tm-tab:nth-child(3) { width: 73px; }
.tm-tab:nth-child(4) { width: 50px; }
.tm-tab:nth-child(5) { width: 40px; }
.tm-tab:nth-child(6) { width: 47px; }
.tm-tab:nth-child(7) { width: 53px; padding-left: 4px; }
.tm-tab.on { width: 66px; height: 24px; margin-bottom: -1px; padding-left: 1px; background: #fff; border: 1px solid #d9d9d9; border-bottom: 0; line-height: 22px; }
.tm-grid { display: grid; grid-template-columns: 328px repeat(5, 73px) 1fr; }
.tm-head { height: 57px; flex: none; border-bottom: 1px solid #a0a0a0; margin-left: 1px; width: 767px; grid-template-columns: 328px repeat(5, 73px) 1fr; color: #5f6f82; padding-top: 9px; }
.h-name { position: relative; display: flex; align-items: flex-end; padding: 0 0 3px 6px; border-right: 1px solid #d9d9d9; }
.sort { position: absolute; left: 157px; top: 3px; color: #555; }
.h { display: flex; flex-direction: column; align-items: flex-end; justify-content: flex-end; padding: 0 6px 3px 0; border-right: 1px solid #d9d9d9; }
.h b { font-weight: 400; font-size: 15px; line-height: 19px; color: #444; margin-bottom: 3px; }
.h span, .h-name span { line-height: 16px; font-size: 11.500px; }
.h.eng { border-right: 0; align-items: flex-start; padding-left: 6px; white-space: nowrap; }
.tm-body { flex: 1; min-height: 0; display: flex; position: relative; }
.tm-rows { margin-left: 1px; width: 752px; flex: none; }
.tm-rows .tm-grid { grid-template-columns: 328px repeat(5, 73px) 59px; width: 752px; }
.sec { height: 38px; }
.sec i { background: #fef8e4; border-right: 1px solid #ecdcae; }
.sn { color: #2f6fb7; font-size: 15px; line-height: 22px; padding: 10px 0 0 10px; white-space: nowrap; }
.row { height: 28px; }
.row .n { display: flex; align-items: center; font-size: 11.500px; color: #222; white-space: nowrap; padding: 0 0 2px 9px; }
.exp { color: #8b8b8b; margin-right: 13px; }
.ap { margin-right: 6px; }
.ps-app { width: 16px; height: 16px; margin-right: 6px; background: #001e36; border: 1px solid #2a8fd0; color: #46aeea; font-size: 8.500px; line-height: 14px; text-align: center; }
.row i { background: #fdf1c2; border-right: 1px solid #efdfae; text-align: right; padding-right: 6px; line-height: 27px; font-size: 11.200px; white-space: nowrap; overflow: hidden; }
.row i.m1 { background: #e0cfa4; }
.row i.m2 { background: #fbeba9; }
.row i.m3 { background: #f9e59a; }
.row u { text-decoration: none; padding-left: 6px; line-height: 27px; font-size: 11.500px; overflow: hidden; white-space: nowrap; }
.selrow { background: #d9d9d9; }
.selrow i { background: #e1dfd5; border-right-color: #e1dfd5; }
.selrow u { background: #dcdcdc; }
.tm-scroll { width: 15px; flex: none; background: #f0f0f0; display: flex; flex-direction: column; align-items: center; padding-top: 6px; color: #333; }
.tm-scroll span { width: 15px; height: 97px; background: #c2c2c2; margin-top: 5px; }

/* Resource Monitor */
.resmon { position: absolute; left: 659px; top: 384px; width: 822px; height: 576px; background: #fff; border: 1px solid #6aa5dc; display: flex; flex-direction: column; }
.rm-title { height: 29px; padding-left: 8px; gap: 4px; color: #222; font-size: 11.500px; }
.win-btns.dark { right: 17px; gap: 35px; top: -1px; }
.rm-menu { height: 19px; flex: none; display: flex; gap: 14px; padding-left: 6px; font-size: 11.500px; line-height: 21px; }
.rm-tabs { height: 26px; flex: none; display: flex; align-items: flex-end; background: #f0f0f0; padding: 0 8px 1px 2px; position: relative; font-size: 11.500px; }
.rm-tabs::after { content: ""; position: absolute; left: 2px; right: 8px; bottom: 0; height: 2px; background: #e2e2e2; }
.rt { height: 19px; line-height: 18px; background: #f2f2f2; border: 1px solid #e0e0e0; border-bottom: 0; padding-left: 5px; white-space: nowrap; }
.t1 { width: 61px; }
.t2 { width: 49px; }
.t3 { width: 53px; height: 20px; background: #fff; border: 1px dotted #222; margin-bottom: 1px; padding-left: 4px; }
.t4 { width: 50px; padding-left: 8px; }
.t5 { width: 55px; padding-left: 6px; }
.rm-main { height: 500px; flex: none; display: flex; background: #fff; }
.rm-left { width: 587px; flex: none; padding-top: 7px; }
.pane { border: 1px solid #7d7d7d; border-top-color: #444; width: 586px; margin-left: 0; }
.pane-head { height: 30px; display: flex; align-items: center; padding-left: 6px; position: relative; background: linear-gradient(#fafafa, #e6e6e6 45%, #b9b9b9); border-bottom: 1px solid #8c8c8c; font-size: 10.500px; color: #333; }
.pane-head strong { width: 158px; font-size: 12px; color: #111; white-space: nowrap; }
.col { position: absolute; right: 11px; top: 5px; }
.chip { width: 9px; height: 13px; margin-right: 8px; border-top: 2px solid #333; border-bottom: 1px solid #e8e8e8; }
.chip.g { background: #0ee00e; }
.chip.b { background: linear-gradient(#00008c 70%, #8fb8ee 70%); border-top-color: #000; }
.ph-t { white-space: nowrap; }
.inuse { width: 181px; }
.ptable { display: flex; height: 145px; font-size: 10.500px; }
.pcols { width: 566px; flex: none; }
.pr { display: grid; grid-template-columns: 99px 51px 80px 80px 79px 81px 80px; height: 17px; line-height: 17px; white-space: nowrap; color: #333; }
.pr span { padding-left: 7px; border-right: 1px solid #ededed; overflow: hidden; }
.pr .r { text-align: right; padding: 0 7px 0 0; }
.pr span:last-child { border-right: 0; padding-right: 7px; }
.phead { height: 25px; line-height: 24px; }
.pr .ck-c { display: flex; align-items: center; padding-left: 4px; }
.ck { width: 13px; height: 13px; margin-right: 5px; border: 1px solid #555; background: #fff; flex: none; }
.sorted { position: relative; }
.sorted::before { content: ""; position: absolute; left: 36px; top: 1px; width: 5px; height: 5px; border: solid #aaa; border-width: 0 1px 1px 0; transform: rotate(45deg) scale(.8); }
.pscroll { width: 18px; flex: none; background: #f0f0f0; display: flex; flex-direction: column; align-items: center; color: #333; padding-top: 6px; }
.pscroll span { width: 15px; height: 16px; margin-top: 4px; background: #cdcdcd; }
.pdown { margin-top: auto; margin-bottom: 6px; }
.phys { margin-top: 6px; height: 186px; border-top-color: #555; }
.phys .pane-head { height: 29px; }
.phys-body { padding: 16px 8px 0; }
.membar { width: 568px; height: 24px; display: flex; border: 1px solid #888; }
.mb-use { width: 387px; background: linear-gradient(#97b60e, #86a80a); }
.mb-mod { width: 3px; background: #c4902c; }
.mb-sb { width: 174px; background: linear-gradient(#2f75cc, #3d80d2); }
.mb-free { flex: 1; background: #b9d0ee; }
.legend { display: flex; margin: 8px 0 0 30px; font-size: 10.500px; line-height: 13px; color: #333; height: 48px; }
.lg { width: 102px; display: flex; gap: 3px; }
.lg i { width: 14px; height: 14px; border: 1px solid #8d8d8d; flex: none; }
.lg p { margin-top: 1px; }
.hw { background: #c4c4c4; }
.use { background: #86aa0a; border-color: #86aa0a !important; }
.mod { background: #ef8a05; }
.sb { background: #3e7fcc; }
.free { background: #b5cdec; }
.stats { display: grid; grid-template-columns: 60px 70px; margin: 0 0 0 229px; font-size: 10.500px; line-height: 13px; color: #333; }
.vscroll { position: relative; width: 14px; flex: none; background: #f0f0f0; color: #c4c4c4; display: flex; flex-direction: column; align-items: center; padding-top: 11px; }
.left-s { margin-left: 1px; width: 15px; }
.right-s { width: 17px; padding-left: 2px; }
.right-s .sd { left: 4px; }
.sd { position: absolute; bottom: 5px; left: 2px; color: #bbb; }
.sd.short { bottom: 22px; }
.rm-split { width: 7px; flex: none; background: #f0f0f0; position: relative; }
.rm-split::after { content: ""; position: absolute; left: 1px; top: 5px; bottom: 28px; width: 1px; background: #555; }
.rm-right { width: 193px; flex: none; display: flex; flex-direction: column; padding-top: 7px; background: #f0f0f0; }
.graphs { border: solid #7d7d7d; border-width: 1px 0 1px 1px; background: #fff; height: 453px; flex: none; }
.gh { padding-left: 10px; background: linear-gradient(#fafafa, #e6e6e6 45%, #b9b9b9); }
.views { position: absolute; right: 7px; top: 3px; width: 85px; height: 23px; background: #dedede; display: flex; align-items: center; font-size: 11px; color: #333; }
.views span { width: 71px; text-align: center; }
.views i { width: 1px; height: 18px; background: #555; margin-right: 2px; }
.gbody { position: relative; padding: 3px 0 0 10px; width: 192px; }
.gr-line { display: flex; justify-content: space-between; width: 168px; height: 18px; line-height: 19px; font-size: 11px; color: #333; padding-left: 2px; white-space: nowrap; }
.gr-line:nth-child(3n+1) { line-height: 17px; }
.chart {
  position: relative;
  width: 170px; height: 102px;
  background:
    linear-gradient(90deg, transparent 6px, #1e6a1e 6px 7px, transparent 7px) 0 0 / 15px 100%,
    linear-gradient(transparent 9px, #1e6a1e 9px) 0 1px / 100% 10px,
    #000;
  border-top: 1px solid #888; border-left: 1px solid #888;
}
.fill {
  position: absolute; left: 0; right: 0; bottom: 0;
  background:
    linear-gradient(90deg, transparent 6px, #16cf16 6px 7px, transparent 7px) 0 0 / 15px 100%,
    linear-gradient(transparent 9px, #16cf16 9px) 0 0 / 100% 10px,
    #006400;
  border-top: 1px solid #16cf16;
}
.f68 { height: 68%; }
.f42 { height: 42%; }
.brk { position: absolute; right: 3px; width: 6px; border: solid #111; border-width: 1px 1px 1px 0; }
.b1 { top: 11px; height: 122px; }
.b2 { top: 149px; height: 122px; }
.b3 { top: 287px; height: 122px; }
.hscroll { height: 16px; margin-top: 22px; display: flex; align-items: center; background: #f0f0f0; padding: 0 4px; color: #333; justify-content: space-between; }
.hscroll span { width: 154px; height: 15px; margin-right: 4px; background: #cdcdcd; }

/* Alert dialog */
.dialog { position: absolute; left: 198px; top: 270px; width: 344px; height: 120px; background: #f0f0f0; box-shadow: 0 0 3px rgba(0,0,0,.5); display: flex; flex-direction: column; }
.dlg-title { height: 30px; flex: none; background: #fff; padding-left: 8px; color: #8f8f8f; font-size: 12px; line-height: 29px; }
.dlg-body { flex: 1; display: flex; flex-direction: column; }
.dlg-msg { display: flex; padding: 11px 0 0 11px; gap: 16px; }
.dlg-msg p { font-size: 12px; line-height: 14px; color: #222; letter-spacing: -.1px; white-space: nowrap; }
.dlg-btn { width: 76px; height: 20px; margin: 18px 0 0 138px; background: #e1e1e1; border: 1px solid #adadad; text-align: center; line-height: 19px; color: #222; }
```
